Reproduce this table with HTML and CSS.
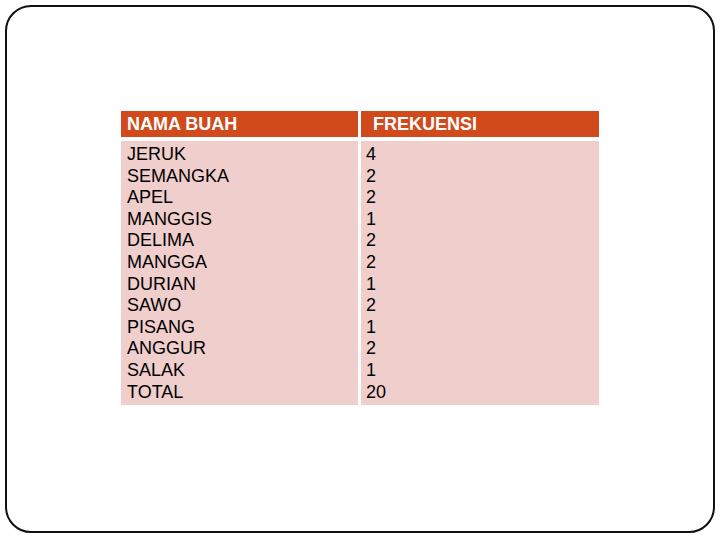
FILE: index.html
```html
<!DOCTYPE html>
<html>
<head>
<meta charset="utf-8">
<link rel="stylesheet" href="styles.css">
</head>
<body>
<div class="slide">
  <div class="freq">
    <div class="head h1">NAMA BUAH</div>
    <div class="head h2">FREKUENSI</div>
    <div class="cell c1">JERUK<br>SEMANGKA<br>APEL<br>MANGGIS<br>DELIMA<br>MANGGA<br>DURIAN<br>SAWO<br>PISANG<br>ANGGUR<br>SALAK<br>TOTAL</div>
    <div class="cell c2">4<br>2<br>2<br>1<br>2<br>2<br>1<br>2<br>1<br>2<br>1<br>20</div>
  </div>
</div>
</body>
</html>
```
FILE: styles.css
```css
html, body {
  margin: 0;
  padding: 0;
  background: #ffffff;
}
body {
  width: 720px;
  height: 540px;
  overflow: hidden;
  font-family: "Liberation Sans", Arial, sans-serif;
}
.slide {
  box-sizing: border-box;
  margin: 5px 0 0 5px;
  width: 710px;
  height: 528px;
  border: 2px solid #111;
  border-radius: 26px;
  padding: 104px 0 0 114px;
}
.freq {
  display: grid;
  grid-template-columns: 237px 238px;
  grid-template-rows: 26px 264px;
  column-gap: 3px;
  row-gap: 4px;
  width: 478px;
}
.head {
  background: #d04a1c;
  color: #ffffff;
  font-weight: bold;
  font-size: 18px;
  line-height: 27px;
}
.h1 { padding-left: 6px; }
.h2 { padding-left: 12px; }
.cell {
  background: #efcecc;
  color: #000;
  font-size: 18px;
  line-height: 21.6px;
  padding-top: 3px;
}
.c1 { padding-left: 6px; }
.c2 { padding-left: 5px; }
```
